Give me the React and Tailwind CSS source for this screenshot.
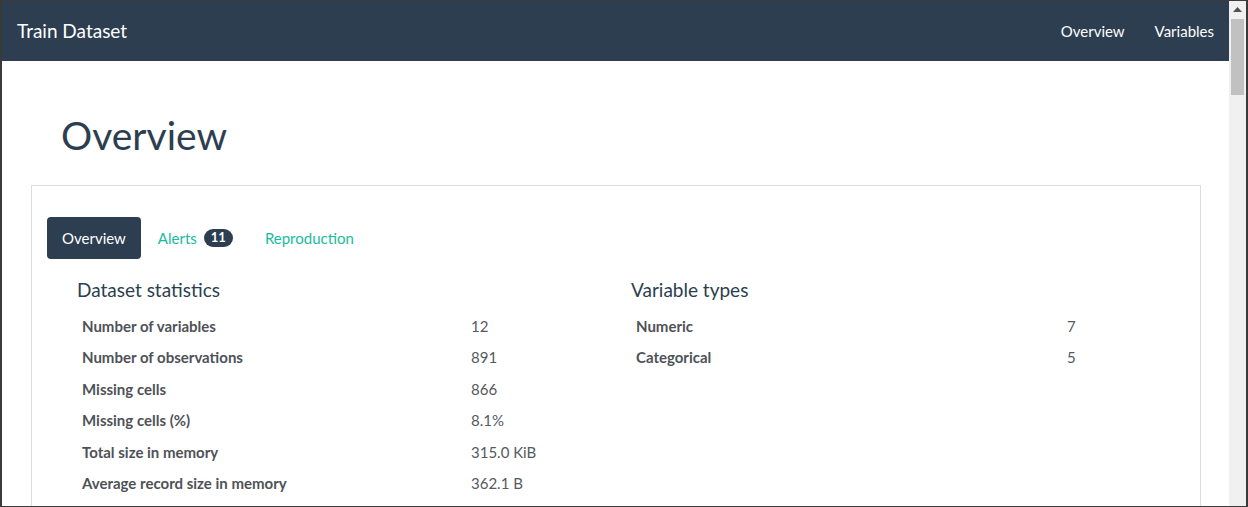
import React from 'react';

const stats = [
  ['Number of variables', '12'],
  ['Number of observations', '891'],
  ['Missing cells', '866'],
  ['Missing cells (%)', '8.1%'],
  ['Total size in memory', '315.0 KiB'],
  ['Average record size in memory', '362.1 B'],
];

const types = [
  ['Numeric', '7'],
  ['Categorical', '5'],
];

const StatTable = ({ rows, labelWidth }) => (
  <div className="flex flex-col">
    {rows.map(([label, value]) => (
      <div key={label} className="flex items-center h-[31.4px] text-[15px]">
        <div className={`${labelWidth} pl-[5px] font-bold text-[#4e5257]`}>{label}</div>
        <div className="text-[#555a60]">{value}</div>
      </div>
    ))}
  </div>
);

export default function App() {
  return (
    <div
      className="w-[1248px] h-[507px] overflow-hidden flex bg-white border-l-2 border-r-2 border-t border-b border-[#3a3a3a]"
      style={{ fontFamily: 'Lato, "Open Sans", sans-serif' }}
    >
      <div className="flex-1 flex flex-col min-w-0">
        {/* navbar */}
        <div className="h-[60px] shrink-0 bg-[#2c3e50] flex items-center justify-between pl-[15px] pr-[15px] text-white">
          <div className="text-[19px]">Train Dataset</div>
          <div className="flex gap-[30px] text-[15px]">
            <span>Overview</span>
            <span>Variables</span>
          </div>
        </div>

        <div className="flex-1 overflow-hidden">
          <h1 className="pl-[59px] pt-[51px] text-[39px] leading-[1.2] text-[#2c3e50]">Overview</h1>

          <div className="ml-[29px] mt-[26px] w-[1170px] h-[400px] border border-[#dcdce3] px-[15px] pt-[31px]">
            {/* tabs */}
            <div className="flex gap-[2px] text-[15px]">
              <div className="h-[42px] px-[15px] flex items-center rounded bg-[#2c3e50] text-white">Overview</div>
              <div className="h-[42px] px-[15px] flex items-center text-[#18bc9c]">
                Alerts
                <span className="ml-[7px] h-[18px] px-[7px] flex items-center rounded-full bg-[#2c3e50] text-white text-[13px] font-bold leading-none">11</span>
              </div>
              <div className="h-[42px] px-[15px] flex items-center text-[#18bc9c]">Reproduction</div>
            </div>

            <div className="flex mt-[20px]">
              <div className="w-[569px] pl-[30px]">
                <h4 className="text-[19px] leading-[1.2] text-[#2c3e50] mb-[9px]">Dataset statistics</h4>
                <StatTable rows={stats} labelWidth="w-[394px]" />
              </div>
              <div className="w-[569px] pl-[15px]">
                <h4 className="text-[19px] leading-[1.2] text-[#2c3e50] mb-[9px]">Variable types</h4>
                <StatTable rows={types} labelWidth="w-[436px]" />
              </div>
            </div>
          </div>
        </div>
      </div>

      {/* scrollbar */}
      <div className="w-[17px] shrink-0 bg-[#f0f0f0] flex flex-col items-center">
        <div className="h-[17px] w-full flex items-center justify-center">
          <svg width="9" height="5" viewBox="0 0 9 5">
            <path d="M0 5 L4.5 0 L9 5 Z" fill="#505050" />
          </svg>
        </div>
        <div className="mt-[1px] w-[13px] h-[76px] bg-[#c1c1c1]" />
      </div>
    </div>
  );
}
